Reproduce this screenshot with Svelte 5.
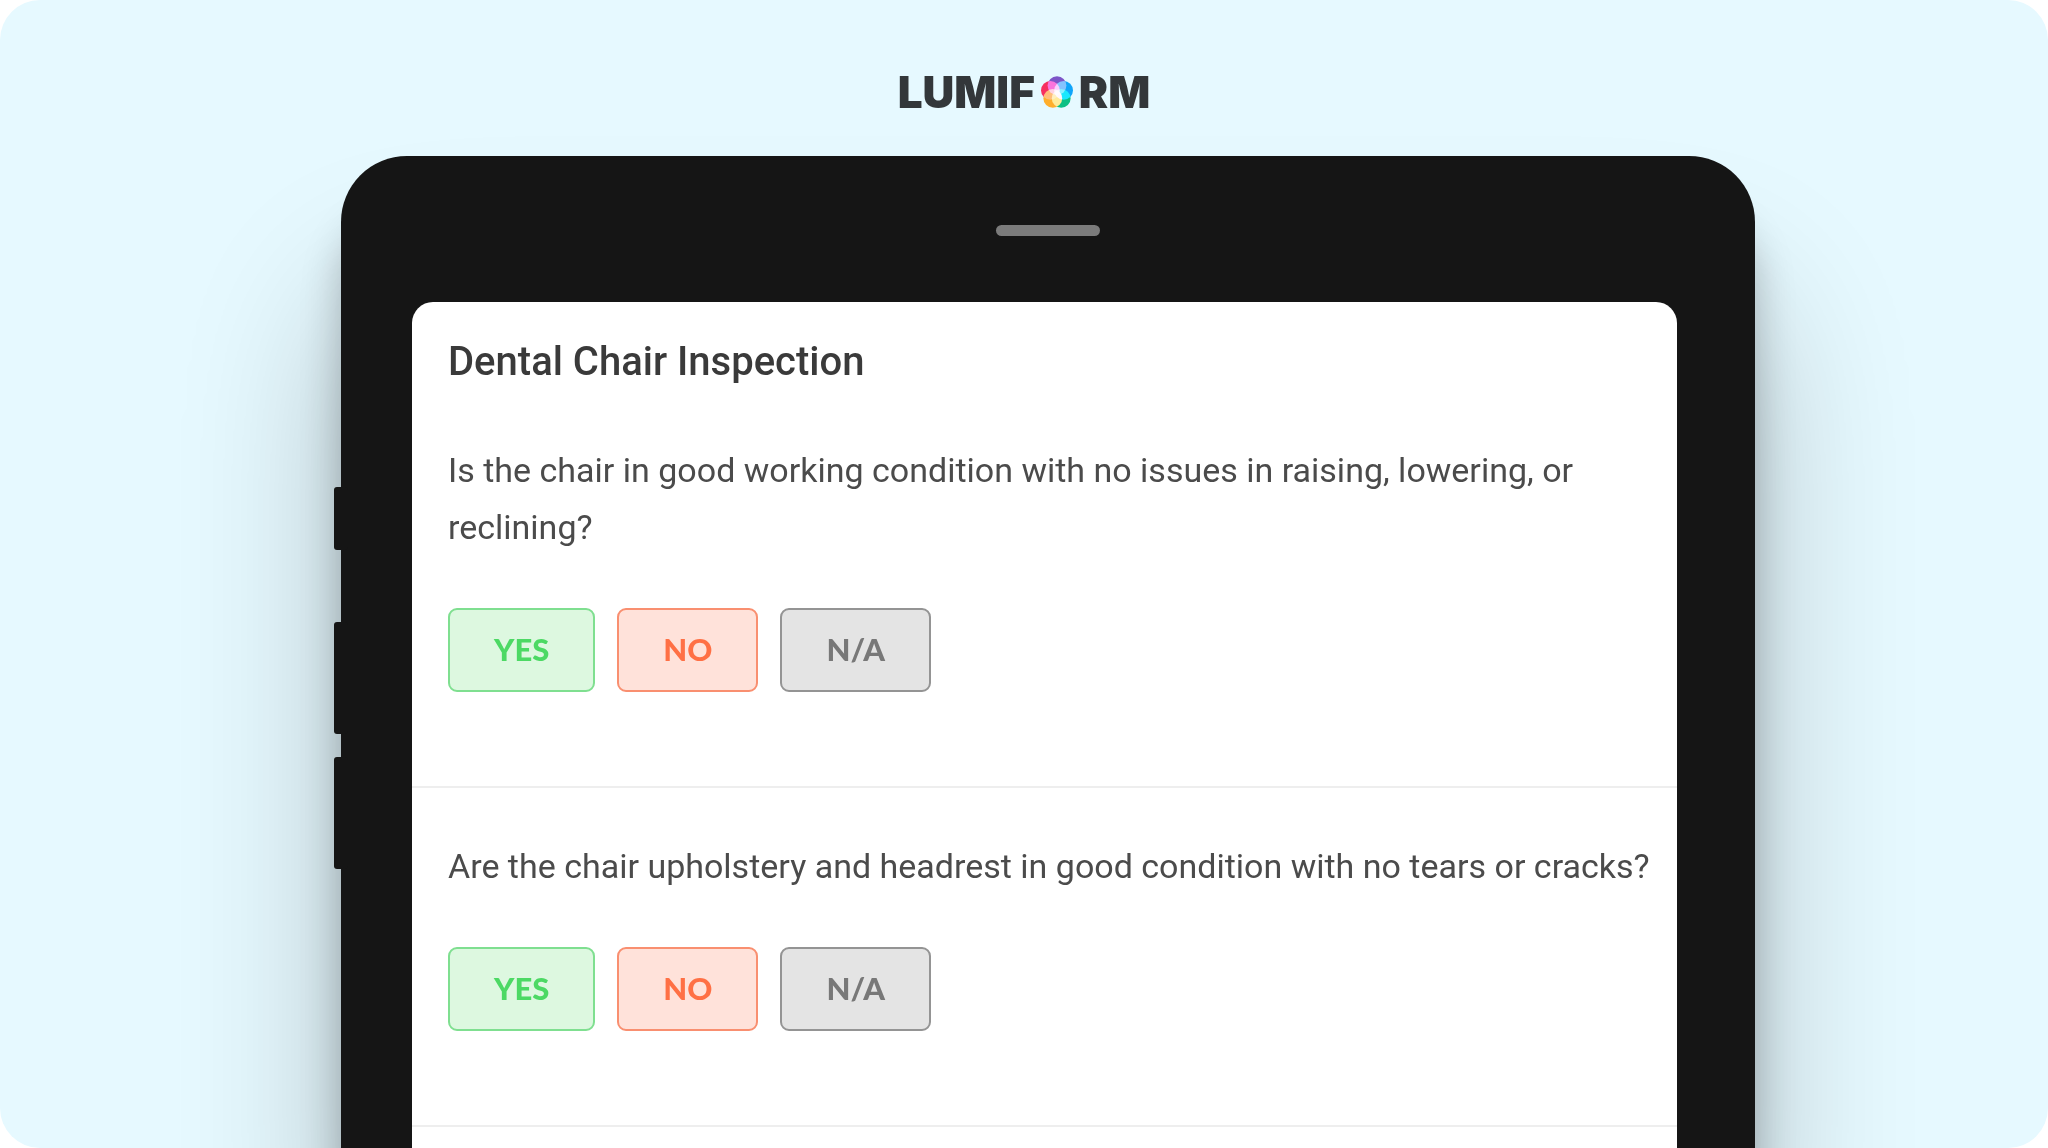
<script>
  const sections = [
    {
      title: 'Dental Chair Inspection',
      questions: [
        'Is the chair in good working condition with no issues in raising, lowering, or reclining?',
        'Are the chair upholstery and headrest in good condition with no tears or cracks?'
      ]
    }
  ];
  const options = [
    { label: 'YES', tone: 'yes' },
    { label: 'NO', tone: 'no' },
    { label: 'N/A', tone: 'na' }
  ];
  let answers = $state({});
</script>

<div class="page">
  <header class="logo" aria-label="Lumiform">
    <span>LUMIF</span>
    <svg viewBox="0 0 32 32" aria-hidden="true">
      <g class="petals">
        <circle cx="16" cy="9.6" r="9.4" fill="#7d55c8" />
        <circle cx="22.6" cy="14.4" r="9.4" fill="#0fa5fa" />
        <circle cx="20.2" cy="22.4" r="9.4" fill="#0cbf84" />
        <circle cx="11.8" cy="22.4" r="9.4" fill="#ffae2b" />
        <circle cx="9.4" cy="14.4" r="9.4" fill="#f62f60" />
      </g>
    </svg>
    <span>RM</span>
  </header>

  <div class="tablet">
    <i class="key key-1"></i>
    <i class="key key-2"></i>
    <i class="key key-3"></i>
    <div class="speaker"></div>

    <main class="screen">
      {#each sections as section}
        <h1>{section.title}</h1>
        {#each section.questions as question, i}
          <section class="question">
            <p id="q{i}">{question}</p>
            <div class="options" role="group" aria-labelledby="q{i}">
              {#each options as option}
                <button
                  class={option.tone}
                  aria-pressed={answers[i] === option.label}
                  onclick={() => (answers[i] = option.label)}
                >{option.label}</button>
              {/each}
            </div>
          </section>
        {/each}
      {/each}
    </main>
  </div>
</div>

<style>
  :global(body) {
    background: #fff;
  }
  .page {
    display: flex;
    flex-direction: column;
    min-height: 100vh;
    border-radius: 40px;
    background: #e6f9ff;
    overflow: hidden;
    font-family: Roboto, 'Liberation Sans', sans-serif;
  }

  .logo {
    display: flex;
    justify-content: center;
    align-items: center;
    gap: 6px;
    height: 64px;
    padding: 60px 0 32px;
    font-family: Inter, 'Open Sans', sans-serif;
    font-size: 44px;
    font-weight: 900;
    color: #33373a;
  }
  .logo svg {
    width: 32px;
    height: 32px;
  }
  .petals {
    isolation: isolate;
  }
  .petals circle {
    mix-blend-mode: screen;
  }

  .tablet {
    flex: 1;
    display: flex;
    flex-direction: column;
    position: relative;
    margin: 0 293px 0 341px;
    padding-top: 69px;
    border-radius: 66px 66px 0 0;
    background: #151515;
    box-shadow:
      0 140px 160px rgba(0, 0, 0, 0.24),
      0 60px 40px rgba(0, 0, 0, 0.24);
  }
  .key {
    position: absolute;
    left: -7px;
    width: 14px;
    height: 112px;
    border-radius: 3px;
    background: #151515;
  }
  .key-1 {
    top: 331px;
    height: 63px;
  }
  .key-2 { top: 466px; }
  .key-3 { top: 601px; }
  .speaker {
    align-self: center;
    width: 104px;
    height: 11px;
    border-radius: 6px;
    background: #7b7b7b;
  }

  .screen {
    flex: 1;
    margin: 66px 78px 0 71px;
    border-radius: 21px 21px 0 0;
    background: #fff;
    overflow: hidden;
  }
  h1 {
    margin: 0;
    padding: 36px 36px 0;
    font-size: 40px;
    font-weight: 500;
    line-height: 48px;
    color: #3a3a3a;
  }
  .question {
    padding: 56px 0 94px 36px;
    border-bottom: 2px solid #eee;
  }
  .question + .question {
    padding-top: 50px;
  }
  p {
    margin: 0 0 52px;
    font-size: 34px;
    line-height: 57px;
    color: #4b4b4b;
  }
  .options {
    display: flex;
    gap: 22px;
  }
  button {
    height: 84px;
    padding: 0 44px 2px;
    border: 2px solid;
    border-radius: 9px;
    font-family: Lato, 'Open Sans', sans-serif;
    font-size: 31px;
    font-weight: 900;
    cursor: pointer;
  }
  .yes {
    color: #4cd964;
    background: #ddf8e0;
    border-color: #7fdf90;
  }
  .no {
    color: #ff7045;
    background: #ffe2da;
    border-color: #f98f70;
  }
  .na {
    color: #787878;
    background: #e4e4e4;
    border-color: #949494;
  }
</style>
